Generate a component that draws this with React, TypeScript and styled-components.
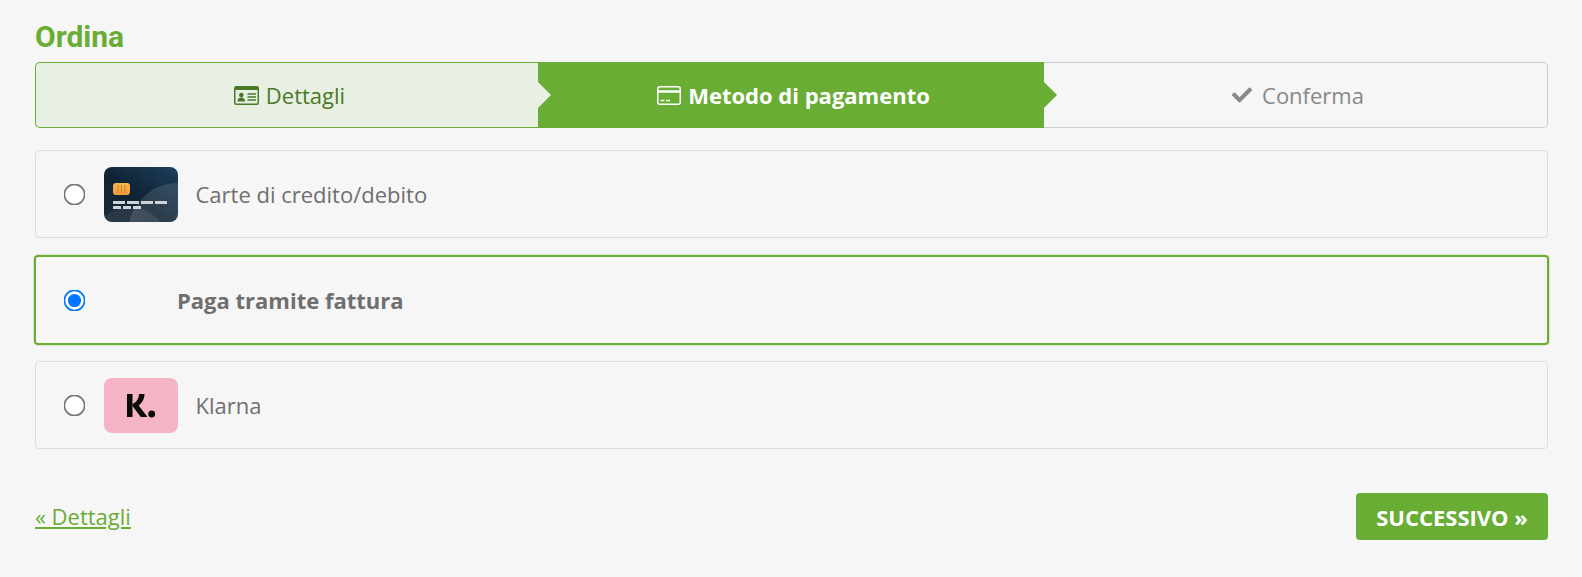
import {FaCheck} from 'react-icons/fa'
import styled, {createGlobalStyle} from 'styled-components'

const green = '#69ad35'

const GlobalStyle = createGlobalStyle`
  html, body {
    margin: 0;
    background: #f6f6f6;
    font-family: 'Open Sans', 'Liberation Sans', sans-serif;
  }
`

const Page = styled.div`
  box-sizing: border-box;
  width: 1582px;
  height: 577px;
  padding: 19px 34px 0 35px;
  overflow: hidden;
`

const Title = styled.h1`
  margin: 0 0 7px;
  height: 36px;
  font-family: Roboto, 'Liberation Sans', sans-serif;
  font-size: 30px;
  line-height: 36px;
  font-weight: 700;
  color: ${green};
`

const Steps = styled.div`
  display: grid;
  grid-template-columns: 503px 506px 1fr;
  height: 66px;
  margin-bottom: 22px;
`

type StepState = 'done' | 'active' | 'todo'

const stepBg: Record<StepState, string> = {
  done: '#e8f0e4',
  active: green,
  todo: 'transparent',
}
const stepColor: Record<StepState, string> = {
  done: '#4a7a25',
  active: '#fff',
  todo: '#888',
}
const stepBorder: Record<StepState, string> = {
  done: green,
  active: green,
  todo: '#ccc',
}

const Step = styled.div<{$state: StepState}>`
  position: relative;
  box-sizing: border-box;
  display: flex;
  align-items: center;
  justify-content: center;
  gap: 7px;
  padding-left: 5px;
  font-size: 22px;
  font-weight: ${p => (p.$state === 'active' ? 700 : 400)};
  color: ${p => stepColor[p.$state]};
  background: ${p => stepBg[p.$state]};
  border: 1px solid ${p => stepBorder[p.$state]};
  border-left-width: ${p => (p.$state === 'done' ? '1px' : '0')};
  border-right-width: ${p => (p.$state === 'todo' ? '1px' : '0')};
  border-radius: ${p =>
    p.$state === 'done'
      ? '5px 0 0 5px'
      : p.$state === 'todo'
        ? '0 5px 5px 0'
        : '0'};

  ${p =>
    p.$state !== 'todo' &&
    `
    &::after {
      content: '';
      position: absolute;
      z-index: 1;
      top: 50%;
      right: -13px;
      width: 13px;
      height: 26px;
      margin-top: -13px;
      background: ${stepBg[p.$state]};
      clip-path: polygon(0 0, 100% 50%, 0 100%);
    }
  `}
`

const CheckIcon = styled(FaCheck)`
  margin-right: 3px;
`

const PaymentRow = styled.label<{$selected?: boolean}>`
  box-sizing: border-box;
  display: flex;
  align-items: center;
  margin: ${p => (p.$selected ? '-1px -1px 16px' : '0 0 18px')};
  height: ${p => (p.$selected ? '90px' : '88px')};
  padding-left: 28px;
  border: ${p => (p.$selected ? `2px solid ${green}` : '1px solid #ddd')};
  box-shadow: ${p => (p.$selected ? '0 0 0 1px rgba(105, 173, 53, 0.2)' : 'none')};
  border-radius: 4px;
  font-size: 22px;
  font-weight: ${p => (p.$selected ? 700 : 400)};
  color: #6f6f6f;
`

const Radio = styled.input.attrs({type: 'radio', name: 'payment'})`
  flex: none;
  width: 13px;
  height: 13px;
  margin: 0 23px 0 4px;
  transform: scale(1.69);
`

const LogoBox = styled.span<{$bg?: string}>`
  flex: none;
  width: 74px;
  height: 55px;
  margin-right: 17.5px;
  border-radius: 8px;
  overflow: hidden;
  background: ${p => p.$bg ?? 'transparent'};

  svg {
    display: block;
  }
`

const EmptyLogo = styled.span`
  flex: none;
  width: 73px;
`

const Footer = styled.div`
  display: flex;
  align-items: center;
  justify-content: space-between;
  margin-top: 44px;
`

const BackLink = styled.a`
  margin-bottom: 2px;
  font-size: 22px;
  color: ${green};
  text-decoration: underline;
`

const NextButton = styled.button`
  box-sizing: border-box;
  width: 192px;
  height: 47px;
  padding: 0;
  border: 0;
  border-radius: 4px;
  background: ${green};
  color: #fff;
  font-family: inherit;
  font-size: 22px;
  font-weight: 700;
`

const IdCardIcon = () => (
  <svg width="25" height="19" viewBox="0 0 25 19" fill="none">
    <rect x="0.750" y="0.750" width="23.500" height="17.500" rx="1.500" stroke="#4a7a25" strokeWidth="1.500" />
    <path d="M1 2.500h23" stroke="#4a7a25" strokeWidth="3" />
    <circle cx="7.300" cy="9" r="2.300" fill="#4a7a25" />
    <path d="M3.500 15.500c0-2.800 1.600-4 3.800-4s3.800 1.200 3.800 4z" fill="#4a7a25" />
    <path d="M13.500 8h8.500M13.500 11h8.500M13.500 14h8.500" stroke="#4a7a25" strokeWidth="1.300" />
  </svg>
)

const CreditCardIcon = () => (
  <svg width="24" height="19" viewBox="0 0 24 19" fill="none">
    <rect x="0.750" y="0.750" width="22.500" height="17.500" rx="2" stroke="#fff" strokeWidth="1.500" />
    <path d="M1 5.500h22" stroke="#fff" strokeWidth="2.500" />
    <path d="M3.500 14.500h4M9 14.500h4" stroke="#fff" strokeWidth="1.300" />
  </svg>
)

const CardLogo = () => (
  <svg width="74" height="55" viewBox="0 0 74 55">
    <defs>
      <linearGradient id="cardBg" x1="0" y1="1" x2="1" y2="0">
        <stop offset="0" stopColor="#1c2a36" />
        <stop offset="0.45" stopColor="#0f2334" />
        <stop offset="1" stopColor="#1e3f5c" />
      </linearGradient>
      <linearGradient id="chip" x1="0" y1="0" x2="0" y2="1">
        <stop offset="0" stopColor="#f7b84a" />
        <stop offset="1" stopColor="#f59b3c" />
      </linearGradient>
    </defs>
    <rect width="74" height="55" fill="url(#cardBg)" />
    <circle cx="74" cy="66" r="50" fill="#fff" opacity="0.12" />
    <circle cx="26" cy="78" r="38" fill="#fff" opacity="0.08" />
    <rect x="9" y="16" width="17" height="12" rx="3" fill="url(#chip)" />
    <path d="M14 18v8M17.500 18v8M21 18v8" stroke="#c4822f" strokeWidth="1" />
    <g fill="#cfd3d6">
      <rect x="9" y="34" width="12" height="3" />
      <rect x="23" y="34" width="12" height="3" />
      <rect x="37" y="34" width="12" height="3" />
      <rect x="51" y="34" width="12" height="3" />
      <rect x="9" y="39" width="8" height="3" />
      <rect x="19" y="39" width="8" height="3" />
      <rect x="29" y="39" width="8" height="3" />
    </g>
  </svg>
)

const KlarnaLogo = () => (
  <svg width="74" height="55" viewBox="0 0 74 55">
    <rect x="23" y="16" width="5.500" height="23" fill="#0a0b09" />
    <path
      d="M35 16h5.500C40.500 21 38 25 34.700 27.500L43.500 39h-6.700L28.500 28v-2C32.500 24 35 20.500 35 16z"
      fill="#0a0b09"
    />
    <circle cx="47.700" cy="36" r="3.400" fill="#0a0b09" />
  </svg>
)

const App = () => {
  return (
    <Page>
      <GlobalStyle />
      <Title>Ordina</Title>
      <Steps>
        <Step $state="done">
          <IdCardIcon />
          Dettagli
        </Step>
        <Step $state="active">
          <CreditCardIcon />
          Metodo di pagamento
        </Step>
        <Step $state="todo">
          <CheckIcon size={20} />
          Conferma
        </Step>
      </Steps>
      <PaymentRow>
        <Radio />
        <LogoBox>
          <CardLogo />
        </LogoBox>
        Carte di credito/debito
      </PaymentRow>
      <PaymentRow $selected>
        <Radio defaultChecked />
        <EmptyLogo />
        Paga tramite fattura
      </PaymentRow>
      <PaymentRow>
        <Radio />
        <LogoBox $bg="#f5b4c5">
          <KlarnaLogo />
        </LogoBox>
        Klarna
      </PaymentRow>
      <Footer>
        <BackLink href="#">« Dettagli</BackLink>
        <NextButton>SUCCESSIVO »</NextButton>
      </Footer>
    </Page>
  )
}

export default App
